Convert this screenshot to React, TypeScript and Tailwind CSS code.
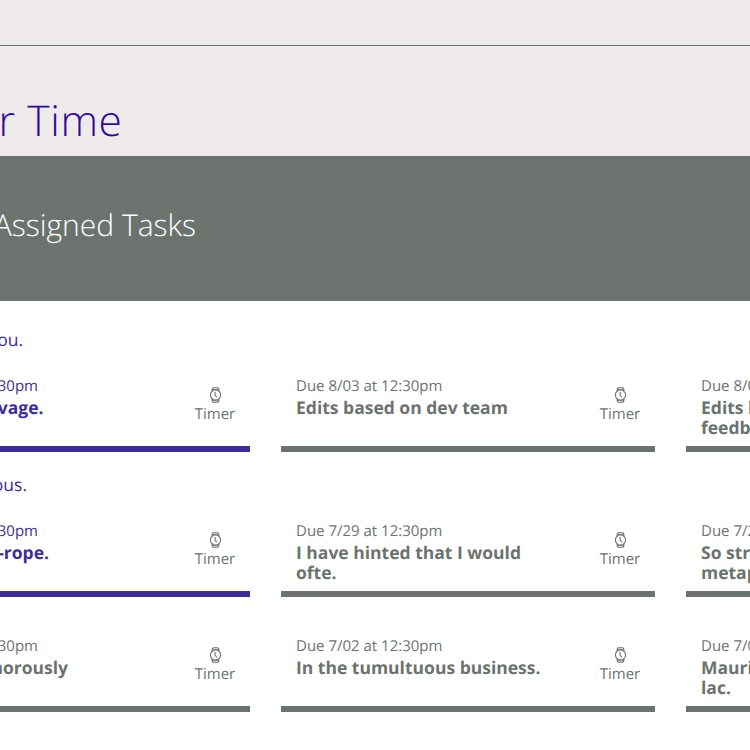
import React from "react";

function WatchIcon() {
  return (
    <svg width="16" height="18" viewBox="0 0 16 18" fill="none" stroke="currentColor" strokeWidth="1.1" strokeLinejoin="round" strokeLinecap="round">
      <circle cx="8.5" cy="9" r="5.1" />
      <path d="M5.2 5V2.9L6.1 1.8H10.9L11.8 2.9V5M5.2 13V15.1L6.1 16.2H10.9L11.8 15.1V13" />
      <path d="M5.6 3.4H11.4M5.6 14.6H11.4" strokeWidth="0.8" />
      <path d="M8.1 6.2V9.2L9.6 11" />
    </svg>
  );
}

function Timer() {
  return (
    <div className="flex w-[70px] shrink-0 flex-col items-center pt-2 text-[#6c736e]">
      <WatchIcon />
      <span className="text-[15px] leading-5">Timer</span>
    </div>
  );
}

type CardProps = { date: string; lines: string[] };

function Card({ date, lines }: CardProps) {
  return (
    <div className="flex h-[74px] w-[374px] shrink-0 justify-between border-b-6 border-[#6c736e] pl-[15px] text-[#6c736e]">
      <div className="-mt-[2px] whitespace-nowrap">
        <div className="text-[15px] leading-5">{date}</div>
        <div className="pt-[2px] text-[17.5px] leading-5 font-bold">
          {lines.map((line) => (
            <div key={line}>{line}</div>
          ))}
        </div>
      </div>
      <Timer />
    </div>
  );
}

type EdgeCardProps = { title: string; titleBox: string; active?: boolean };

function EdgeCard({ title, titleBox, active = false }: EdgeCardProps) {
  const tone = active ? "border-[#3d2d9c] text-[#3d2d9c]" : "border-[#6c736e] text-[#6c736e]";
  return (
    <div className={`flex h-[74px] w-[250px] shrink-0 justify-between border-b-6 ${tone}`}>
      <div className="-mt-[2px] whitespace-nowrap">
        <div className="flex w-[38px] justify-end text-[15px] leading-5">30pm</div>
        <div className={`flex justify-end pt-[2px] text-[17.5px] leading-5 font-bold ${titleBox}`}>{title}</div>
      </div>
      <Timer />
    </div>
  );
}

export default function App() {
  return (
    <div className="h-[750px] w-[750px] overflow-hidden bg-white font-['Open_Sans',sans-serif] [text-rendering:geometricPrecision]">
      <header className="h-[156px] bg-[#efebea]">
        <div className="h-[46px] border-b border-[#6c736e]" />
        <h1 className="flex w-[122.5px] justify-end pt-[46px] text-[42.5px] leading-[58px] font-light tracking-[0.6px] whitespace-nowrap text-[#340a9e]">
          r Time
        </h1>
      </header>
      <section className="h-[145px] bg-[#6c736e] pt-[48px]">
        <h2 className="flex w-[196px] justify-end text-[30px] leading-[42px] font-light whitespace-nowrap text-white">
          Assigned Tasks
        </h2>
      </section>
      <main>
        <div className="h-[77px] pt-[27px] text-[#3d2d9c]">
          <p className="flex w-[23px] justify-end text-[17.5px] leading-6">ou.</p>
        </div>
        <div className="flex gap-[31px]">
          <EdgeCard title="vage." titleBox="w-[43.5px]" active />
          <Card date="Due 8/03 at 12:30pm" lines={["Edits based on dev team"]} />
          <Card date="Due 8/03" lines={["Edits based", "feedback."]} />
        </div>
        <div className="h-[71px] pt-[21px] text-[#3d2d9c]">
          <p className="flex w-[27px] justify-end text-[17.5px] leading-6">ous.</p>
        </div>
        <div className="flex gap-[31px]">
          <EdgeCard title="-rope." titleBox="w-[49px]" active />
          <Card date="Due 7/29 at 12:30pm" lines={["I have hinted that I would", "ofte."]} />
          <Card date="Due 7/29" lines={["So string", "metaphor"]} />
        </div>
        <div className="flex gap-[31px] pt-[41px]">
          <EdgeCard title="norously" titleBox="w-[68px]" />
          <Card date="Due 7/02 at 12:30pm" lines={["In the tumultuous business."]} />
          <Card date="Due 7/02" lines={["Mauris", "lac."]} />
        </div>
      </main>
    </div>
  );
}
